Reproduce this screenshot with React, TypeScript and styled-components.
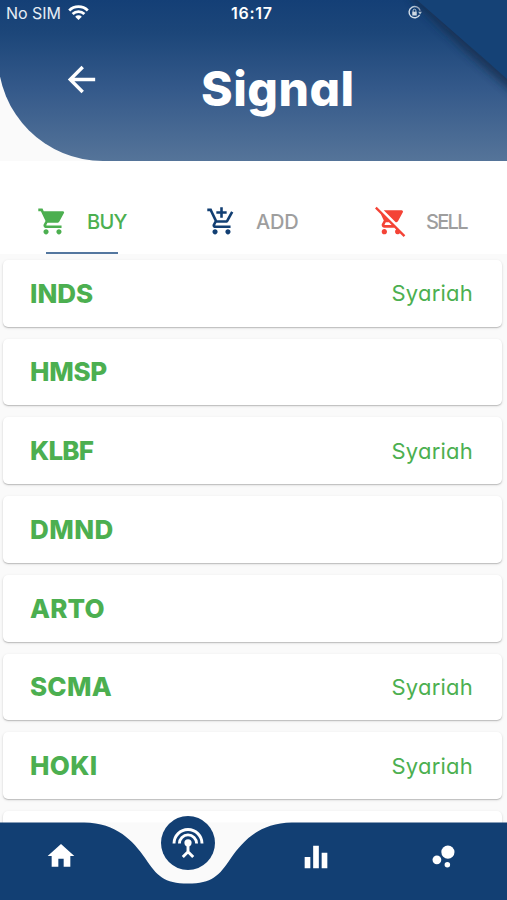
import React from "react";
import styled, { createGlobalStyle } from "styled-components";
import {
  MdAddShoppingCart,
  MdArrowBack,
  MdBubbleChart,
  MdEqualizer,
  MdHome,
  MdRemoveShoppingCart,
  MdShoppingCart,
} from "react-icons/md";

const navy = "#123f73";
const green = "#4caf50";

const GlobalStyle = createGlobalStyle`
  * { box-sizing: border-box; }
  body {
    margin: 0;
    overflow: hidden;
    font-family: Inter, "Open Sans", sans-serif;
    font-feature-settings: "cv11" 1;
  }
  svg { display: block; flex: none; }
`;

const Screen = styled.div`
  position: relative;
  width: 507px;
  height: 900px;
  overflow: hidden;
  display: flex;
  flex-direction: column;
  background: #fafafa;
`;

const Header = styled.header`
  position: relative;
  flex: none;
  height: 161px;
  margin-left: -2px;
  padding-left: 2px;
  border-bottom-left-radius: 105px;
  background: linear-gradient(#143f76 0%, #1c4679 20%, #34598a 55%, #557499 100%);
  color: #fff;
`;

const StatusBar = styled.div`
  display: grid;
  grid-template-columns: 168px 168px 1fr;
  align-items: center;
  height: 25px;
  padding-left: 6px;
  font-size: 16px;
`;

const Carrier = styled.div`
  display: flex;
  align-items: center;
  gap: 7px;
  color: #e6edf5;
  letter-spacing: -0.05px;
`;

const Clock = styled.div`
  padding-left: 57px;
  font-weight: 600;
  letter-spacing: 0.7px;
`;

const LockSlot = styled.div`
  padding-left: 65px;
`;

const TitleBar = styled.div`
  display: flex;
  align-items: center;
  height: 110px;
  padding: 0 0 1px 61px;
`;

const Title = styled.h1`
  margin: 19px 0 0 99px;
  font-size: 48px;
  line-height: 60px;
  font-weight: 800;
  letter-spacing: 0.5px;
`;

const Fold = styled.svg`
  position: absolute;
  top: 0;
  right: 0;
`;

const Tabs = styled.nav`
  flex: none;
  display: grid;
  grid-template-columns: repeat(3, 169px);
  height: 93px;
  padding-top: 28px;
  background: #fff;
`;

const Tab = styled.div<{ $color: string }>`
  position: relative;
  display: flex;
  align-items: center;
  gap: 19px;
  height: 65px;
  padding: 0 0 1px 37px;
  color: ${(p) => p.$color};
`;

const TabLabel = styled.span<{ $spacing: number }>`
  padding-top: 1px;
  font-size: 20px;
  font-weight: 500;
  letter-spacing: ${(p) => p.$spacing}px;
`;

const Indicator = styled.span`
  position: absolute;
  left: 46px;
  bottom: 0;
  width: 72px;
  height: 2px;
  background: #54779f;
`;

const List = styled.main`
  flex: none;
  display: flex;
  flex-direction: column;
  gap: 12px;
  padding: 5.75px 5.5px 0 3px;
`;

const Card = styled.article`
  display: flex;
  align-items: center;
  justify-content: space-between;
  height: 66.75px;
  padding: 0 28.5px 0 27px;
  border-radius: 5px;
  background: #fff;
  color: ${green};
  box-shadow: 0 1px 1px rgba(0, 0, 0, 0.17), 0 1px 3px rgba(0, 0, 0, 0.13);
`;

const Ticker = styled.strong<{ $spacing: number }>`
  font-size: 26px;
  font-weight: 800;
  letter-spacing: ${(p) => p.$spacing}px;
`;

const Category = styled.span`
  font-size: 22px;
  letter-spacing: 0.22px;
`;

const BottomBar = styled.nav`
  position: absolute;
  left: 0;
  bottom: 0;
  width: 507px;
  height: 86px;
`;

const BarShape = styled.svg`
  position: absolute;
  inset: 0;
`;

const BarItems = styled.div`
  position: relative;
  display: grid;
  grid-template-columns: repeat(4, 127.4px);
  height: 86px;
  color: #fff;
`;

const BarItem = styled.div<{ $active?: boolean }>`
  display: flex;
  justify-content: center;
  padding: ${(p) => (p.$active ? "2px 0 0 0" : "26px 5px 0 0")};
`;

const ActiveCircle = styled.div`
  display: grid;
  place-items: center;
  width: 54px;
  height: 54px;
  margin-right: 6px;
  border-radius: 50%;
  background: ${navy};
`;

const WifiIcon = () => (
  <svg width="21" height="16" viewBox="0 0 21 16" fill="none" stroke="#fff" strokeWidth="2.8">
    <path d="M1.2 5.5a13.3 13.3 0 0 1 18.6 0M4.6 9.1a8.5 8.5 0 0 1 11.8 0" />
    <path d="M10.5 15 7.2 11.8a4.5 4.5 0 0 1 6.6 0Z" fill="#fff" stroke="none" />
  </svg>
);

const RotationLockIcon = () => (
  <svg width="15" height="15" viewBox="0 0 16 16" fill="none" stroke="#d5dfe9" strokeWidth="1.5">
    <path d="M13.5 10.5A6 6 0 1 1 14 6" />
    <path d="m11.9 7.3 4-.1-1.9 3Z" fill="#d5dfe9" stroke="none" />
    <rect x="5.6" y="7.2" width="4.8" height="4" fill="#d5dfe9" stroke="none" />
    <path d="M6.5 7.5V6a1.5 1.5 0 0 1 3 0v1.5" strokeWidth="1" />
  </svg>
);

const AntennaIcon = () => (
  <svg width="32" height="32" viewBox="0 0 32 32" fill="none" stroke="#fff" strokeWidth="2.9">
    <path d="M2 16.5a14 14 0 0 1 28 0" />
    <path d="M7.4 16.5a8.6 8.6 0 0 1 17.2 0" />
    <circle cx="16" cy="15.8" r="3.6" fill="#fff" stroke="none" />
    <path d="M16 17v7.5M10.8 30l5.2-5.3 5.2 5.3" />
  </svg>
);

const stocks = [
  { code: "INDS", syariah: true, spacing: 0 },
  { code: "HMSP", syariah: false, spacing: -0.3 },
  { code: "KLBF", syariah: true, spacing: -0.8 },
  { code: "DMND", syariah: false, spacing: 0.45 },
  { code: "ARTO", syariah: false, spacing: 0.2 },
  { code: "SCMA", syariah: true, spacing: 0.2 },
  { code: "HOKI", syariah: true, spacing: 0.3 },
  { code: "", syariah: false, spacing: 0 },
];

export default function App() {
  return (
    <>
      <GlobalStyle />
      <Screen>
        <Header>
          <StatusBar>
            <Carrier>
              No SIM
              <WifiIcon />
            </Carrier>
            <Clock>16:17</Clock>
            <LockSlot>
              <RotationLockIcon />
            </LockSlot>
          </StatusBar>
          <TitleBar>
            <MdArrowBack size={41} />
            <Title>Signal</Title>
          </TitleBar>
          <Fold width="107" height="110" viewBox="0 0 107 110">
            <defs>
              <filter id="foldShadow" x="-30%" y="-30%" width="160%" height="160%">
                <feGaussianBlur stdDeviation="4" />
              </filter>
            </defs>
            <path
              d="M15 -20L12 0L63 49Q84 68 120 98L130 -20Z"
              fill="#142f50"
              opacity="0.8"
              filter="url(#foldShadow)"
            />
            <path d="M17 0L65 42Q86 60 107 79V0Z" fill="#154276" />
          </Fold>
        </Header>
        <Tabs>
          <Tab $color={green}>
            <MdShoppingCart size={31} />
            <TabLabel $spacing={-0.7}>BUY</TabLabel>
            <Indicator />
          </Tab>
          <Tab $color="#9e9e9e">
            <MdAddShoppingCart size={31} color={navy} />
            <TabLabel $spacing={-0.2}>ADD</TabLabel>
          </Tab>
          <Tab $color="#9e9e9e">
            <MdRemoveShoppingCart size={32} color="#f44336" />
            <TabLabel $spacing={-1.7}>SELL</TabLabel>
          </Tab>
        </Tabs>
        <List>
          {stocks.map((s, i) => (
            <Card key={i}>
              <Ticker $spacing={s.spacing}>{s.code}</Ticker>
              {s.syariah && <Category>Syariah</Category>}
            </Card>
          ))}
        </List>
        <BottomBar>
          <BarShape width="507" height="86" viewBox="0 0 507 86">
            <rect x="84" y="8.5" width="208" height="62" fill="#fafafa" />
            <path
              d="M0 8.5H84C117 9 133 27 145 44C157 62 164 69.5 188 69.5S219 62 231 44C243 27 259 9 292 8.5H507V86H0Z"
              fill={navy}
            />
          </BarShape>
          <BarItems>
            <BarItem>
              <MdHome size={32} />
            </BarItem>
            <BarItem $active>
              <ActiveCircle>
                <AntennaIcon />
              </ActiveCircle>
            </BarItem>
            <BarItem>
              <MdEqualizer size={34} />
            </BarItem>
            <BarItem>
              <MdBubbleChart size={33} />
            </BarItem>
          </BarItems>
        </BottomBar>
      </Screen>
    </>
  );
}
